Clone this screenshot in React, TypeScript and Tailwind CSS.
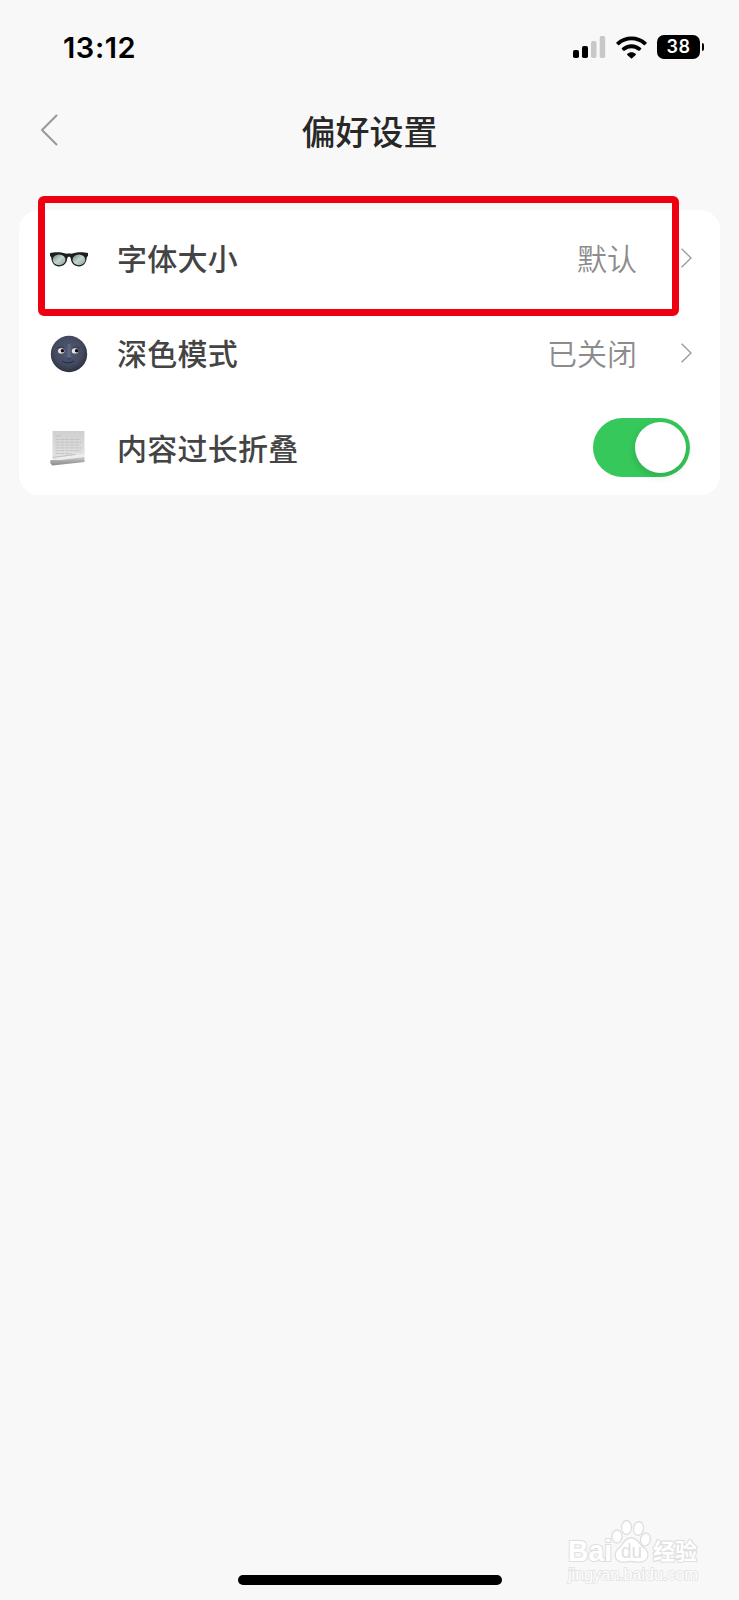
import { useState } from 'react';
import type { ReactNode } from 'react';

function SignalIcon() {
  return (
    <svg width="33" height="22" viewBox="0 0 33 22">
      <rect x="0" y="14" width="6" height="8" rx="1.8" fill="#000" />
      <rect x="9" y="10" width="6" height="12" rx="1.8" fill="#000" />
      <rect x="18" y="5" width="5.5" height="17" rx="1.8" fill="#c8c8c8" />
      <rect x="26.7" y="0" width="5.5" height="22" rx="1.8" fill="#c8c8c8" />
    </svg>
  );
}

function WifiIcon() {
  return (
    <svg width="31" height="23" viewBox="0 0 31 23" fill="#000">
      <path d="M0.5 6.3C8.7 -1.6 22.3 -1.6 30.5 6.3Q31 6.9 30.5 7.5L28.9 9Q28.3 9.4 27.7 8.9C20.8 2.8 10.2 2.8 3.3 8.9Q2.7 9.4 2.1 9L0.5 7.5Q0 6.9 0.5 6.3Z" />
      <path d="M5.9 12C11.2 6.9 19.8 6.9 25.1 12Q25.6 12.6 25.1 13.2L23.4 14.7Q22.8 15.1 22.2 14.6C18.3 11.3 12.7 11.3 8.8 14.6Q8.2 15.1 7.6 14.7L5.9 13.2Q5.4 12.6 5.9 12Z" />
      <path d="M11.3 17.7C13.6 15.6 17.4 15.6 19.7 17.7Q20.2 18.3 19.7 18.9L16.1 22.3Q15.5 22.9 14.9 22.3L11.3 18.9Q10.8 18.3 11.3 17.7Z" />
    </svg>
  );
}

function Battery({ level }: { level: number }) {
  return (
    <div className="flex items-center gap-[2px]">
      <div className="flex h-6 w-[43px] items-center justify-center rounded-[7px] bg-black font-['Inter'] text-[18px] leading-none font-semibold tracking-[0.4px] text-white">
        {level}
      </div>
      <div className="h-2 w-[2px] rounded-r-full bg-black" />
    </div>
  );
}

function ChevronRight() {
  return (
    <svg width="11" height="20" viewBox="0 0 11 20" fill="none" stroke="#999" strokeWidth="1.3">
      <path d="M0.6 0.8L10 10L0.6 19.2" />
    </svg>
  );
}

function GlassesIcon() {
  return (
    <svg width="38" height="38" viewBox="0 0 38 38">
      <defs>
        <linearGradient id="lens" x1="0" y1="0" x2="1" y2="1">
          <stop offset="0" stopColor="#71837e" />
          <stop offset="0.5" stopColor="#c3d5d0" />
          <stop offset="1" stopColor="#84a097" />
        </linearGradient>
      </defs>
      <path
        d="M0 13C5 11.7 13 12 16.5 13.8C18 13.3 20 13.3 21.5 13.8C25 12 33 11.7 38 13V15.8L36.8 17.2C36.4 22.8 33.5 26.4 29 26.4C24.4 26.4 21.4 23.4 20.8 18.8C20.5 16.2 17.5 16.2 17.2 18.8C16.6 23.4 13.6 26.4 9 26.4C4.5 26.4 1.6 22.8 1.2 17.2L0 15.8Z"
        fill="#1b1f1e"
      />
      <ellipse cx="9.1" cy="19.8" rx="6.4" ry="5.4" fill="url(#lens)" />
      <ellipse cx="28.9" cy="19.8" rx="6.4" ry="5.4" fill="url(#lens)" />
    </svg>
  );
}

function MoonIcon() {
  return (
    <svg width="38" height="38" viewBox="0 0 38 38">
      <defs>
        <radialGradient id="moon" cx="0.48" cy="0.42" r="0.56">
          <stop offset="0" stopColor="#525b75" />
          <stop offset="0.7" stopColor="#434a60" />
          <stop offset="1" stopColor="#2f3343" />
        </radialGradient>
      </defs>
      <circle cx="19" cy="19" r="18.2" fill="url(#moon)" />
      <path d="M18 9C17.6 15 17.2 19 16.4 22C17.5 23.8 20 23.8 21.4 22.2C20.4 19 20.2 14 20.4 9Z" fill="#5c6782" />
      <path d="M17 22.5C18.2 24 20 24 21.2 22.7" stroke="#2f3548" strokeWidth="0.9" fill="none" />
      <path d="M6.5 13.5C8.5 11.5 12.2 11.3 14.4 13M22.4 13C24.6 11.3 28.3 11.5 29.7 13.5" stroke="#343a4e" strokeWidth="1" fill="none" />
      <ellipse cx="11.2" cy="15.9" rx="3.2" ry="2.6" fill="#ebe5da" />
      <ellipse cx="25" cy="15.9" rx="3.2" ry="2.6" fill="#ebe5da" />
      <circle cx="12.5" cy="15.7" r="1.8" fill="#111" />
      <circle cx="26.6" cy="15.7" r="1.8" fill="#111" />
      <path d="M12 26.2C15.5 28.2 20.5 28.2 24 26" stroke="#2b3144" strokeWidth="1.1" fill="none" />
    </svg>
  );
}

function PageIcon() {
  return (
    <svg width="38" height="38" viewBox="0 0 38 38">
      <defs>
        <linearGradient id="paper" x1="0" y1="0" x2="0" y2="1">
          <stop offset="0" stopColor="#d0d0d0" />
          <stop offset="1" stopColor="#e4e4e4" />
        </linearGradient>
        <linearGradient id="curl" x1="0" y1="0" x2="0" y2="1">
          <stop offset="0" stopColor="#d6d6d6" />
          <stop offset="0.5" stopColor="#a8a8a8" />
          <stop offset="1" stopColor="#8c8c8c" />
        </linearGradient>
      </defs>
      <path d="M2.5 1H34.5V27L2.5 30Z" fill="url(#paper)" />
      <g stroke="#bdbdbd" strokeWidth="0.8">
        <path d="M5.5 6H10.5" />
        <path d="M5.5 9.5H30.5M5.5 12.3H31.5M5.5 15.1H29.5M5.5 17.9H31.5M5.5 20.7H30.5M5.5 23.5H21.5" strokeDasharray="4 0.8" />
      </g>
      <path d="M2.9 27.8L31 24.2L34.5 23.5V27L13.5 29.2Z" fill="#eee" />
      <path d="M2.5 27.5L25.5 24.5" stroke="#b0b0b0" strokeWidth="0.7" />
      <path d="M0.5 30C11.5 30.5 25.5 28 34.5 26.8V32L2.5 35.5C0.1 34.3 -0.2 32 0.5 30Z" fill="url(#curl)" />
    </svg>
  );
}

function Switch({ checked, onChange }: { checked: boolean; onChange: (v: boolean) => void }) {
  return (
    <button
      role="switch"
      aria-checked={checked}
      onClick={() => onChange(!checked)}
      className={`mr-px flex h-[59px] w-[97px] items-center rounded-full p-1 ${checked ? 'justify-end bg-[#36c85a]' : 'justify-start bg-gray-200'}`}
    >
      <span className="size-[51px] rounded-full bg-white shadow-[0_3px_8px_rgba(0,0,0,0.15)]" />
    </button>
  );
}

function SettingRow({ icon, label, children }: { icon: ReactNode; label: string; children: ReactNode }) {
  return (
    <div className="flex h-[95px] items-center pr-[29px] pl-[31px]">
      <div className="pt-[2px]">{icon}</div>
      <span className="ml-[29px] flex-1 pt-[3px] text-[30px] leading-none font-medium tracking-[0.25px] text-[#444]">{label}</span>
      {children}
    </div>
  );
}

function Value({ text }: { text: string }) {
  return (
    <>
      <span className="mr-[44px] pt-[3px] text-[30px] leading-none font-[350] text-[#8c8c8c]">{text}</span>
      <div className="-mr-px">
        <ChevronRight />
      </div>
    </>
  );
}

function Watermark() {
  return (
    <svg width="136" height="70" viewBox="0 0 136 70" className="absolute top-[1517px] left-[565px]" fill="#fff" stroke="#dfdfdf" strokeWidth="1.3">
      <g strokeWidth="2.2" style={{ paintOrder: 'stroke' }} fontFamily="'Liberation Sans', 'Noto Sans CJK SC', sans-serif">
        <text x="3" y="44" fontSize="30" fontWeight="bold" textLength="44" lengthAdjust="spacingAndGlyphs">Bai</text>
        <text x="88" y="42" fontSize="22" fontWeight="bold" textLength="44">经验</text>
        <text x="3" y="63" fontSize="16" textLength="130" lengthAdjust="spacingAndGlyphs" strokeWidth="1.6" stroke="#e2e2e2">
          jingyan.baidu.com
        </text>
      </g>
      <ellipse cx="52" cy="19.5" rx="5" ry="6.5" />
      <ellipse cx="61.5" cy="10.5" rx="5" ry="7" />
      <ellipse cx="73.5" cy="11.5" rx="5" ry="6.8" transform="rotate(8 73.5 11.5)" />
      <ellipse cx="80.5" cy="22.5" rx="5" ry="6.5" transform="rotate(12 80.5 22.5)" />
      <path d="M66 21C59 21 59 27 54 31C49 35 48 43 56 45C60 45.5 62 44.5 66 44.5C70 44.5 73 45.5 77 45C84 43 85 35 79 31C74 27 73 21 66 21Z" />
      <text x="56" y="41" fontSize="20" fontFamily="'Liberation Sans', sans-serif" textLength="21" lengthAdjust="spacingAndGlyphs" fill="#e0e0e0" stroke="none">du</text>
    </svg>
  );
}

export default function App() {
  const [collapse, setCollapse] = useState(true);

  return (
    <div className="relative flex h-[1600px] w-[739px] flex-col bg-[#f8f8f8] font-['Inter','Noto_Sans_CJK_SC',sans-serif]">
      {/* Status bar */}
      <div className="flex h-[94px] items-center justify-between pr-[35px] pl-[63px]">
        <span className="text-[29px] leading-none font-semibold tracking-[0.6px] text-black">13:12</span>
        <div className="flex items-center gap-[10px]">
          <SignalIcon />
          <WifiIcon />
          <Battery level={38} />
        </div>
      </div>

      {/* Header */}
      <header className="grid h-[76px] grid-cols-[100px_1fr_100px] items-center">
        <button aria-label="返回" className="pb-[4px] pl-[40px]">
          <svg width="18" height="32" viewBox="0 0 18 32" fill="none" stroke="#999" strokeWidth="2" strokeLinecap="round" strokeLinejoin="round">
            <path d="M16.5 1.5L2 16L16.5 30.5" />
          </svg>
        </button>
        <h1 className="pt-px text-center text-[34px] leading-none font-medium text-[#282828]">偏好设置</h1>
      </header>

      {/* Settings */}
      <main className="relative mx-[19px] mt-[40px] rounded-[20px] bg-white">
        <SettingRow icon={<GlassesIcon />} label="字体大小">
          <Value text="默认" />
        </SettingRow>
        <SettingRow icon={<MoonIcon />} label="深色模式">
          <Value text="已关闭" />
        </SettingRow>
        <SettingRow icon={<PageIcon />} label="内容过长折叠">
          <Switch checked={collapse} onChange={setCollapse} />
        </SettingRow>
        <div className="pointer-events-none absolute -top-[14px] left-[19px] h-[120px] w-[641px] rounded-[6px] border-[7px] border-[#ee0011]" />
      </main>

      <Watermark />

      {/* Home indicator */}
      <div className="mx-auto mt-auto mb-[15px] h-[10px] w-[264px] rounded-full bg-black" />
    </div>
  );
}
